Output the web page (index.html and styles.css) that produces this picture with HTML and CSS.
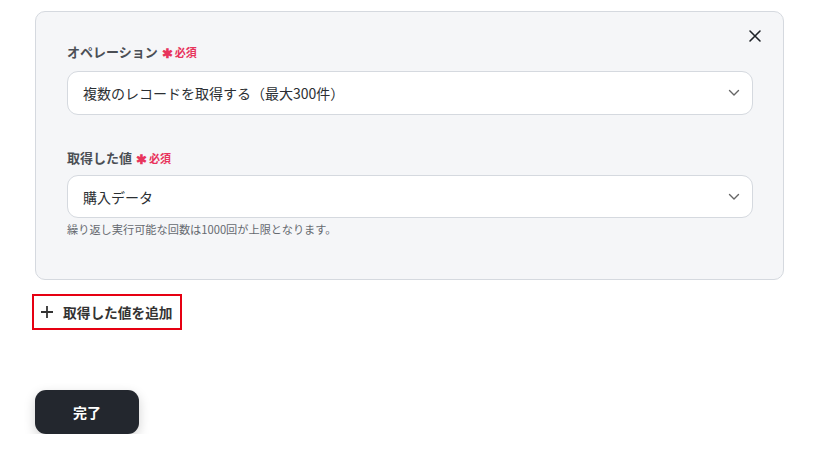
FILE: index.html
```html
<!DOCTYPE html>
<html lang="ja">
<head>
<meta charset="utf-8">
<link rel="stylesheet" href="styles.css">
</head>
<body>
<div class="page">
  <div class="card">
    <button class="close" aria-label="閉じる">
      <svg width="14" height="14" viewBox="0 0 14 14"><path d="M2 2L12 12M12 2L2 12" stroke="#1f2328" stroke-width="1.6" stroke-linecap="round"/></svg>
    </button>
    <div class="field">
      <div class="label">オペレーション<span class="req"><span class="star">✱</span>必須</span></div>
      <div class="select"><span>複数のレコードを取得する（最大300件）</span>
        <svg class="chev" width="12" height="8" viewBox="0 0 12 8"><path d="M1.5 1.5L6 6L10.5 1.5" fill="none" stroke="#666" stroke-width="1.4" stroke-linecap="round" stroke-linejoin="round"/></svg>
      </div>
    </div>
    <div class="field second">
      <div class="label">取得した値<span class="req"><span class="star">✱</span>必須</span></div>
      <div class="select"><span>購入データ</span>
        <svg class="chev" width="12" height="8" viewBox="0 0 12 8"><path d="M1.5 1.5L6 6L10.5 1.5" fill="none" stroke="#666" stroke-width="1.4" stroke-linecap="round" stroke-linejoin="round"/></svg>
      </div>
      <div class="hint">繰り返し実行可能な回数は1000回が上限となります。</div>
    </div>
  </div>
  <button class="add">
    <svg width="14" height="14" viewBox="0 0 14 14"><path d="M7 1V13M1 7H13" stroke="#333" stroke-width="1.8"/></svg>
    <span>取得した値を追加</span>
  </button>
  <button class="done">完了</button>
</div>
</body>
</html>
```
FILE: styles.css
```css
* { box-sizing: border-box; }
html, body { margin: 0; padding: 0; background: #fff; }
body { font-family: "Noto Sans CJK JP", "Noto Sans", sans-serif; color: #333; }
.page { padding: 11px 42px 0 35px; display: flex; flex-direction: column; align-items: flex-start; }
.card {
  position: relative;
  width: 749px;
  height: 269px;
  background: #f5f6f8;
  border: 1px solid #d5d9df;
  border-radius: 10px;
  padding: 30px 30px 0 31px;
}
.close {
  position: absolute; top: 15px; right: 19px;
  width: 18px; height: 18px; padding: 0; border: 0; background: none;
  display: flex; align-items: center; justify-content: center;
}
.field { display: flex; flex-direction: column; }
.field.second { margin-top: 33px; }
.label { font-size: 13px; font-weight: 700; color: #4b4f55; line-height: 20px; display: flex; align-items: center; }
.req { color: #e8345c; font-size: 11px; font-weight: 700; margin-left: 4px; display: flex; align-items: center; }
.star { font-size: 13px; margin-right: 2px; line-height: 1; }
.select {
  margin-top: 9px;
  height: 44px;
  background: #fff;
  border: 1px solid #d5d9df;
  border-radius: 11px;
  display: flex; align-items: center; justify-content: space-between;
  padding: 0 12px 0 15px;
  font-size: 14px; color: #2b2f33;
}
.field.second .select { margin-top: 7px; height: 43px; }
.hint { font-size: 11.2px; color: #666a70; margin-top: 3px; line-height: 17px; }
.add {
  margin-top: 14px; margin-left: -3px;
  height: 36px; padding: 0 7px 0 6px;
  border: 2px solid #e60012; background: #fff;
  display: flex; align-items: center; gap: 9px;
  font-family: inherit; font-size: 13.7px; font-weight: 700; color: #333;
}
.done {
  margin-top: 60px;
  width: 104px; height: 44px;
  background: #23272e; color: #fff;
  border: 0; border-radius: 11px;
  font-family: inherit; font-size: 14px; font-weight: 700;
  box-shadow: 0 4px 12px rgba(0,0,0,0.18);
}
```
